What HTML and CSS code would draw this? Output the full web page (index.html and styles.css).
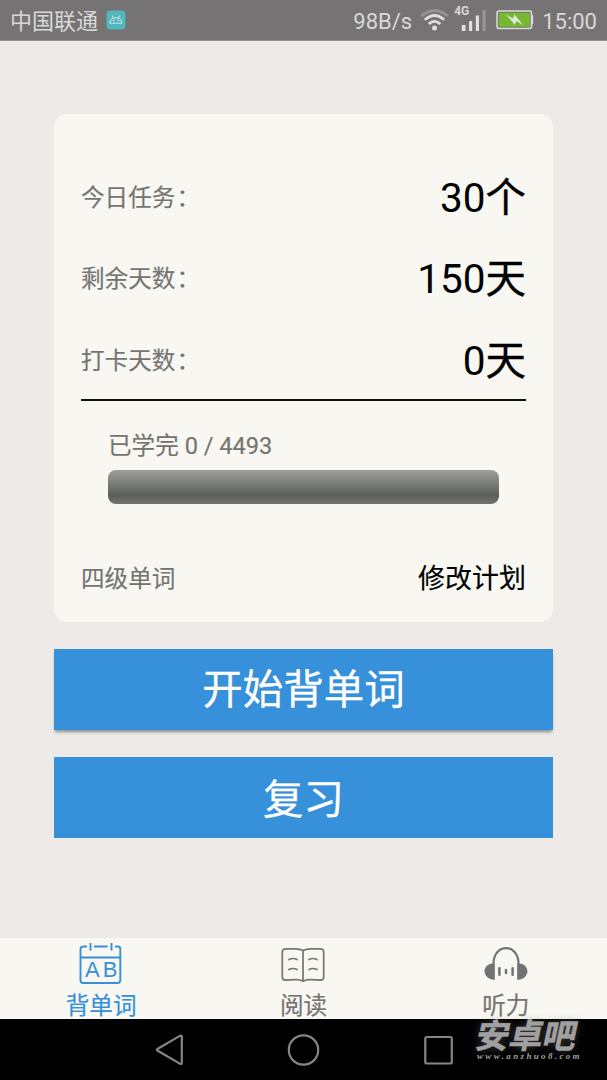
FILE: index.html
```html
<!DOCTYPE html>
<html lang="zh-CN">
<head>
<meta charset="utf-8">
<title>背单词</title>
<link rel="stylesheet" href="styles.css">
</head>
<body>
<div class="screen">
  <header class="status">
    <span class="carrier">中国联通</span>
    <svg class="app-icon" width="20" height="20" viewBox="0 0 20 20"><rect x=".5" y=".5" width="19" height="19" rx="4" fill="#52b6bd"/><path d="M4 13.2C4 5.800 15.700 5.800 15.700 13.200Z M6.200 5.600L7.500 7.900 M13.500 5.600L12.200 7.900" fill="none" stroke="#c6dfdf" stroke-width="1.100"/><path d="M7 10.500h1.200M11.500 10.500h1.200" stroke="#d8eaea" stroke-width="1.300"/></svg>
    <span class="speed">98B/s</span>
    <svg class="wifi" width="29" height="24" viewBox="0 0 29 24"><g fill="none" stroke-width="2.500"><path d="M1.300 8Q14.500-2.800 27.700 8" stroke="#979595"/><path d="M4.800 11.800Q14.500 3.200 24.200 11.800M8.700 16Q14.500 10.700 20.300 16" stroke="#e0dfdf" stroke-width="2.800"/></g><circle cx="14.500" cy="20" r="2.500" fill="#e0dfdf"/></svg>
    <span class="signal"><span class="net">4G</span><svg width="26" height="22" viewBox="0 0 26 22"><path d="M.8 15h3.700v6H.8zM8 11h3.200v10H8zM14.800 5.500h3.200V21h-3.200z" fill="#e0dfdf"/><path d="M21.500 0h3.200v21h-3.200z" fill="#979595"/></svg></span>
    <svg class="battery" width="38" height="20" viewBox="0 0 38 20"><path d="M35 5h1.200q1 0 1 1v7.500q0 1-1 1H35z" fill="#d8d8d8"/><rect x="1" y="1" width="34.500" height="17.500" rx="2" fill="#777474" stroke="#dcdcdc" stroke-width="1.500"/><rect x="2.800" y="2.800" width="31" height="14" fill="#76b82f"/><path d="M10 4.500L17 8.500 18.500 4.500 27 15 20.500 11 18.800 14.800Z" fill="#e4e7df"/></svg>
    <span class="clock">15:00</span>
  </header>

  <main class="content">
    <section class="card">
      <div class="row"><span class="label">今日任务<span class="colon">：</span></span><span class="value">30<span class="unit">个</span></span></div>
      <div class="row"><span class="label">剩余天数<span class="colon">：</span></span><span class="value">150<span class="unit">天</span></span></div>
      <div class="row"><span class="label">打卡天数<span class="colon">：</span></span><span class="value">0<span class="unit">天</span></span></div>
      <div class="divider"></div>
      <div class="progress">
        <div class="progress-text">已学完 0 / 4493</div>
        <div class="bar"></div>
      </div>
      <div class="plan"><span class="label">四级单词</span><span class="edit">修改计划</span></div>
    </section>
    <button class="btn raised">开始背单词</button>
    <button class="btn">复习</button>
  </main>

  <nav class="tabs">
    <div class="tab active">
      <svg width="44" height="44" viewBox="0 0 44 44" fill="none" stroke="#3690da" stroke-width="1.900"><path d="M8 3.500H4.500Q1.500 3.500 1.500 6V37.300Q1.500 40 4.200 40H38.500Q41.300 40 41.300 37.300V6Q41.300 3.500 38.800 3.500H36M15 3.500H28.500M11.500 0V7.500M32.500 0V7.500M1.500 14.500H41.300"/><text x="6" y="34" class="ab">A</text><text x="23.700" y="34" class="ab">B</text></svg>
      <span>背单词</span>
    </div>
    <div class="tab">
      <svg width="44" height="44" viewBox="0 0 44 44" fill="none" stroke="#747474" stroke-width="1.700" stroke-linecap="round"><g transform="translate(0 -1)"><path d="M22 8.500Q19 6.800 15 6.800H5Q1.300 6.800 1.300 10V35Q1.300 38.200 4.500 38.200L14 37.600Q19 37.400 22 39.200Q25 37.400 30 37.600L39.500 38.200Q42.700 38.200 42.700 35V10Q42.700 6.800 39 6.800H29Q25 6.800 22 8.500V39M8 17.500Q12 15.500 16 17.500M8 27.500Q12 25.500 16 27.500M28 17.500Q32 15.500 36 17.500M28 27.500Q32 25.500 36 27.500"/></g></svg>
      <span>阅读</span>
    </div>
    <div class="tab">
      <svg width="44" height="44" viewBox="0 0 44 44"><path d="M9.500 36.500V19.500C10.500 .2 33.500 .2 34.500 19.500V36.500" fill="none" stroke="#747174" stroke-width="2.200"/><path d="M10.600 20.500V36.500H9C-2.200 35-2.200 21 9 20.500ZM33.400 20.500V36.500H35C46.200 35 46.200 21 35 20.500Z" fill="#747174"/><path d="M15.400 25.200V31.800M28.600 25.200V31.800M22 27V30" stroke="#747174" stroke-width="2.500" stroke-linecap="round"/></svg>
      <span>听力</span>
    </div>
  </nav>

  <footer class="sysnav">
    <svg width="44" height="40" viewBox="0 0 44 40"><path d="M12 20.500Q10 19.500 12 18.500L34 5.600Q36 4.700 36 6.500V32.500Q36 34.500 34 33.300Z" transform="translate(-1.200 .3)"/></svg>
    <svg width="44" height="40" viewBox="0 0 44 40"><circle cx="21.500" cy="20" r="14.700"/></svg>
    <svg width="44" height="40" viewBox="0 0 44 40"><rect x="8.300" y="7" width="26.500" height="26.500" rx="1.500"/></svg>
  </footer>

  <div class="watermark"><span class="mark-name">安卓吧</span><span class="mark-url">www.anzhuo8.com</span></div>
</div>
</body>
</html>
```
FILE: styles.css
```css
* { box-sizing: border-box; }
body { margin: 0; font-family: Roboto, "Noto Sans CJK SC", sans-serif; }
.screen { position: relative; width: 607px; height: 1080px; overflow: hidden; display: flex; flex-direction: column; background: #edeae7; }
.status { height: 41px; flex: none; display: flex; align-items: center; padding: 0 10px 0 10px; background: #757373; border-bottom: 1px solid #918f8e; color: #d9d8d8; font-size: 22px; }
.carrier { line-height: 40px; padding-top: 4px; }
.app-icon { margin-left: 8px; }
.speed { margin-left: auto; padding-top: 2px; }
.wifi { margin-left: 8px; }
.signal { position: relative; margin-left: 12px; display: flex; padding-top: 1px; }
.net { position: absolute; left: -7px; top: -5px; font-size: 12px; font-weight: 700; line-height: 14px; }
.battery { margin-left: 9px; }
.clock { margin-left: 8px; padding-top: 2px; }
.content { flex: 1; padding: 73px 54px 0; display: flex; flex-direction: column; }
.card { height: 507.500px; flex: none; border-radius: 13px; background: #f8f7f2; padding: 42px 27px 0; }
.row { display: flex; justify-content: space-between; align-items: center; height: 81.500px; padding-top: 2px; }
.label, .progress-text { color: #747471; font-size: 23.600px; line-height: 34px; -webkit-text-stroke: .15px; }
.colon { margin-left: 1px; }
.value { color: #000; font-size: 40.500px; line-height: 60px; }
.unit { -webkit-text-stroke: .35px; }
.divider { height: 2px; margin-top: -1.500px; background: #111; }
.progress { padding: 28px 27px 0; }
.bar { height: 34px; margin-top: 7px; border-radius: 8px; background: linear-gradient(#9d9f9d, #5b5f5b 75%, #727572); }
.plan { display: flex; justify-content: space-between; align-items: center; margin-top: 54.500px; height: 40px; }
.edit { color: #000; font-size: 27px; line-height: 40px; -webkit-text-stroke: .15px; }
.btn { flex: none; height: 81px; margin: 27px 0 0; padding: 1px 0 0; border: 0; background: #3690da; color: #fff; font: 40.500px/60px Roboto, "Noto Sans CJK SC", sans-serif; -webkit-text-stroke: .3px; }
.btn:last-child { padding-top: 5px; }
.raised { box-shadow: 0 3px 3px -1px rgba(0, 0, 0, .4); }
.tabs { flex: none; height: 82px; display: grid; grid-template-columns: repeat(3, 1fr); background: #f8f7f2; }
.tab { display: flex; flex-direction: column; align-items: center; padding-top: 5px; color: #747471; font-size: 23.600px; line-height: 38px; -webkit-text-stroke: .2px; }
.tab svg { display: block; flex: none; }
.tab.active { color: #3690da; }
.ab { font: 22px "Liberation Sans", Arial, sans-serif; fill: #3690da; stroke: none; }
.sysnav { flex: none; height: 61px; margin-top: -1px; display: flex; justify-content: center; align-items: center; gap: 91px; background: #000; }
.sysnav svg { fill: none; stroke: #858585; stroke-width: 2.200; stroke-linejoin: round; }
.watermark { position: absolute; left: 477px; top: 1012px; display: flex; flex-direction: column; color: #a0a0a0; }
.mark-name { font: 700 33.500px/43px "Noto Sans CJK SC", sans-serif; transform: skewX(-12deg); text-shadow: 0 0 8px rgba(130, 130, 130, .5); -webkit-text-stroke: .5px; }
.mark-url { font: italic bold 9px/10px "Liberation Serif", serif; letter-spacing: 2.350px; margin-top: -4px; }
```
